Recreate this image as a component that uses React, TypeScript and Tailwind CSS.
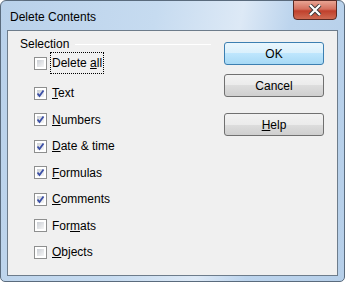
import React from "react";

const items = [
  { pre: "", u: "T", post: "ext", on: true },
  { pre: "", u: "N", post: "umbers", on: true },
  { pre: "", u: "D", post: "ate & time", on: true },
  { pre: "", u: "F", post: "ormulas", on: true },
  { pre: "", u: "C", post: "omments", on: true },
  { pre: "For", u: "m", post: "ats", on: false },
  { pre: "", u: "O", post: "bjects", on: false },
];

const Box = ({ on }: { on: boolean }) => (
  <div className="w-[13px] h-[13px] border border-[#8e8f8f] bg-white p-[2px] shrink-0">
    <div className="w-full h-full bg-gradient-to-br from-[#cbcfd5] to-[#f6f6f6] relative">
      {on && (
        <svg width="13" height="13" viewBox="0 0 13 13" className="absolute -left-[3px] -top-[3px]">
          <path d="M3.5 6.5 L5.5 9 L9.5 3.5" fill="none" stroke="#3b4fa6" strokeWidth="1.8" />
        </svg>
      )}
    </div>
  </div>
);

const Btn = ({ children, def }: { children: React.ReactNode; def?: boolean }) => (
  <button
    className={
      "block w-[100px] h-[23px] rounded-[3px] border text-[12px] text-black leading-none " +
      (def
        ? "border-[#3c7fb1] bg-[linear-gradient(#eaf6fd_0%,#d9f0fc_50%,#bee6fd_50%,#a7d9f5_100%)]"
        : "border-[#707070] bg-[linear-gradient(#f2f2f2_0%,#ebebeb_50%,#dddddd_50%,#cfcfcf_100%)]")
    }
  >
    {children}
  </button>
);

export default function App() {
  return (
    <div className="w-[345px] h-[283px] bg-white font-['Liberation_Sans',sans-serif]">
      <div className="w-[345px] h-[282px] rounded-t-[6px] rounded-b-[5px] border border-[#5a6b7d] bg-[linear-gradient(100deg,#b9d1ea_0%,#c6dbf0_40%,#dde9f6_62%,#bcd4ed_75%,#b6cfe9_100%)] flex flex-col">
        <div className="h-[29px] flex justify-between">
          <div className="pl-[9px] pt-[7px] text-[12px] text-black">Delete Contents</div>
          <div className="mr-[7px] w-[44px] h-[20px] -mt-[1px] rounded-b-[4px] border border-[#5a2a24] bg-[linear-gradient(#e8a493_0%,#d4705e_45%,#c0402c_55%,#cf6a52_100%)] flex items-center justify-center">
            <svg width="14" height="12" viewBox="0 0 14 12">
              <path d="M2 1 L12 11 M12 1 L2 11" stroke="#3a3a3a" strokeWidth="4" />
              <path d="M2 1 L12 11 M12 1 L2 11" stroke="#ffffff" strokeWidth="2.2" />
            </svg>
          </div>
        </div>
        <div className="mx-[6px] h-[246px] border border-[#6d7c8b] bg-[#f0f0f0] flex">
          <div className="w-[216px] pl-[12px] pt-[5px] pr-[13px]">
            <div className="h-[16px] flex items-center gap-[6px] text-[12px] text-black">
              <span>Selection</span>
              <div className="flex-1 h-px bg-[#a0a0a0] border-b border-white" />
            </div>
            <div className="h-[22px] pl-[14px] flex items-center gap-[3px] text-[12px] text-black">
              <Box on={false} />
              <span className="px-[1px] py-[1px] border border-dotted border-black">
                Delete <span className="underline">a</span>ll
              </span>
            </div>
            <div className="mt-[6px]">
              {items.map((it, i) => (
                <div key={i} className="h-[26.5px] pl-[14px] flex items-center gap-[5px] text-[12px] text-black">
                  <Box on={it.on} />
                  <span>
                    {it.pre}
                    <span className="underline">{it.u}</span>
                    {it.post}
                  </span>
                </div>
              ))}
            </div>
          </div>
          <div className="pt-[11px] flex flex-col">
            <Btn def>OK</Btn>
            <div className="mt-[9px]">
              <Btn>Cancel</Btn>
            </div>
            <div className="mt-[16px]">
              <Btn>
                <span className="underline">H</span>elp
              </Btn>
            </div>
          </div>
        </div>
      </div>
    </div>
  );
}
